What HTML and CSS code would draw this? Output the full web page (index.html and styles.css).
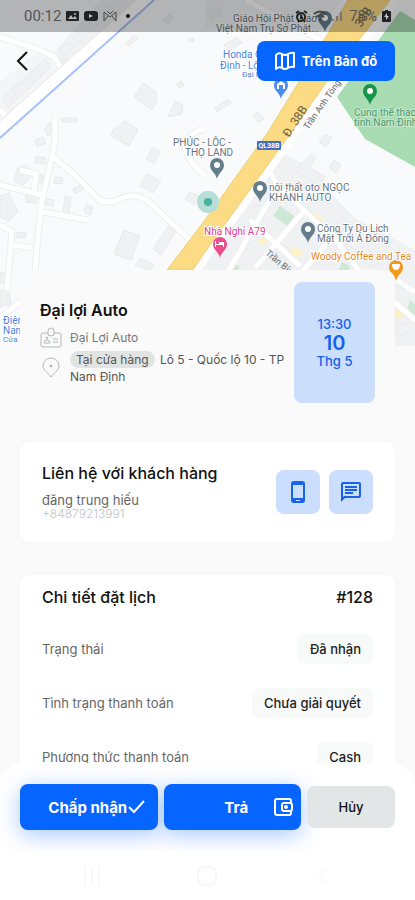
FILE: index.html
```html
<!DOCTYPE html>
<html lang="vi">
  <head>
    <meta charset="UTF-8" />
    <meta name="viewport" content="width=device-width, initial-scale=1.0" />
    <title>Chi tiết đặt lịch</title>
    <link rel="stylesheet" href="styles.css">
  </head>
  <body>
    <div class="screen">
      <svg class="map" viewBox="0 0 415 346" preserveAspectRatio="xMidYMin slice">
        <rect width="415" height="346" fill="#f8fafb" />

        <!-- built-up blocks -->
        <polygon points="100,0 142,0 65,68 52,55" fill="#f0f2f3" />
        <polygon points="205,0 340,0 325,28 205,28" fill="#f2f4f5" />
        <polygon points="0,82 42,48 56,70 0,120" fill="#f3f5f6" />
        <polygon points="276,150 300,162 355,218 415,250 415,346 392,346 392,272 200,272" fill="#eff1f3" />

        <!-- buildings -->
        <g class="building">
          <path d="M143 83l13 9 1 8-5 10-18-13zM175 101l8 4-1 9-14 3zM113 130l12-9 13 9-9 16-18-10z" />
          <path d="M152 147l8 5-6 12-8-5zM147 174l14 7-8 12-13-7zM190 192l9 4-5 9-9-6z" />
          <path d="M124 230l16 6-9 24-17-6zM168 226l8 5-15 24-8-6zM141 258l14 7-5 5-15-5z" />
          <path d="M126 43l8-8 4 3-9 8zM163 20l6-6 4 4-6 7zM189 38l5 0 0 4-5 0zM177 84l4-3 3 4-5 3z" />
          <path d="M58 50l11-9 5 6-11 9zM72 38l11-8 4 5-10 9zM60 62l6-4 5 8-6 3z" />
          <path d="M100 13l8-9 6 6-9 8zM110 3l8-3 7 5-9 8zM84 28l9-9 6 5-9 9z" />
          <path d="M38 65l7-7 5 9-7 7zM30 73l6-6 6 9-7 6zM21 81l7-6 6 9-7 6zM11 89l8-6 6 9-8 7zM2 98l6-6 7 9-7 7z" />
          <path d="M44 130l6-8 5 5-7 9zM62 118l15 0 0 4-15 0zM35 140l8-3 3 6-9 4zM36 156l10 2-1 6-10-1z" />
          <path d="M18 167l9-2 4 12-8 8-9-4zM34 172l9 3-1 8-9-2zM55 177l8 1-1 6-8-1zM0 196l9-3 9 19-9 9-9-4z" />
          <path d="M26 195l11 1-1 7-10-1zM46 199l8 1-1 6-7-1zM65 196l6 1-2 18-6-1zM73 189l9-5 3 4-10 6zM86 204l7 3-2 8-7-3z" />
          <path d="M17 232l9 1-1 5-9-1zM0 290l9 2 2 12-11 3zM0 272l8 2-2 10-6-2z" />
          <path d="M302 163l9-9 5 4-6 9 15 10-6 9-25-16zM334 160l7 5-5 8-7-5zM325 134l7 4-6 9-7-5z" />
          <path d="M224 45l13-8 5 6-13 8zM215 108l13-9 3 4-14 9zM253 115l5-3 6 7-6 3zM206 13l10-7 6 8-10 6z" />
          <path d="M241 207l13-15 9 6-12 15zM222 226l12-12 10 7-12 13zM241 246l10-12 10 8-10 10zM270 251l10-9 10 8-10 9z" />
          <path d="M294 219l9-12 10 8-10 10zM337 253l10-9 12 9-9 8zM361 259l8-8 12 8-8 9zM396 328l8-5 6 6-8 7z" />
        </g>
        <g fill="#fdf2c4">
          <path d="M315 213l8 5-4 6-8-4zM293 247l10 5-5 6-9-5zM258 241l6-5 4 5-6 5zM397 306l9 5-6 8-9-5z" />
        </g>
        <g fill="#cde8d5">
          <path d="M280 206l14 10-6 10-15-10zM342 262l7 4 0 4-10 0zM232 263l8 3-2 4-8 0zM410 300l5 4 0 12-8-6z" />
        </g>

        <!-- park -->
        <polygon points="400,11 415,20 415,167 365,139 337,97" fill="#a9dcb2" />

        <!-- small streets -->
        <g class="street-edge">
          <path d="M0 37L40 50L54 57L62 70M0 110L16 128M55 118V140L52 157L42 200L38 235L29 346M53 157L75 175L98 199Q106 205 120 199Q136 191 150 203L192 242" />
          <path d="M0 185L42 195M20 170L36 174L34 192M43 212L88 220M0 225L12 232L7 290M12 245L32 248M205 129Q188 132 185 148Q190 165 206 176" />
          <path d="M246 0L320 40M0 318L20 302L40 330M266 166L278 186L336 240L360 272M278 186L228 272M304 211L255 268M250 220L300 266M330 240L302 272M385 272L415 292M392 300L415 320" />
        </g>
        <g class="street">
          <path d="M0 37L40 50L54 57L62 70M0 110L16 128M55 118V140L52 157L42 200L38 235L29 346M53 157L75 175L98 199Q106 205 120 199Q136 191 150 203L192 242" />
          <path d="M0 185L42 195M20 170L36 174L34 192M43 212L88 220M0 225L12 232L7 290M12 245L32 248M205 129Q188 132 185 148Q190 165 206 176" />
          <path d="M246 0L320 40M0 318L20 302L40 330M266 166L278 186L336 240L360 272M278 186L228 272M304 211L255 268M250 220L300 266M330 240L302 272M385 272L415 292M392 300L415 320" />
        </g>
        <path d="M145 0L0 129" stroke="#e9ebed" stroke-width="13" />
        <path d="M145 0L0 129" stroke="#fff" stroke-width="11" />
        <path d="M154 0L0 138" stroke="#a6c1fb" stroke-width="2" />

        <!-- highway -->
        <path d="M396 0L328 86L293 136L205 258L194 274" fill="none" stroke="#fff" stroke-width="8" />
        <polygon points="348,0 390,0 328,80 293,130 205,252 193,270 167,270 205,220 268,132 300,80" fill="#fbdc85" stroke="#f1cf78" />
        <rect x="257" y="141" width="24" height="9" rx="1" fill="#3f6fc9" />
        <text class="shield" x="269" y="148">QL38B</text>
        <text class="road" transform="translate(289 138) rotate(-57)">Đ. 38B</text>
        <text class="road" transform="translate(361 28) rotate(-57)">38B</text>
        <text class="lane" transform="translate(308 130) rotate(-55)">Trần Anh Tông</text>
        <text class="lane" transform="translate(265 254) rotate(40)">Trần Bích</text>
        <circle cx="208" cy="202" r="11" fill="#b5ded6" />
        <circle cx="208" cy="202" r="4" fill="#4db29e" />

        <!-- places -->
        <defs>
          <path id="pin" d="M0 0C-1-6-7-8-7-14A7 7 0 0 1 7-14C7-8 1-6 0 0Z" />
        </defs>
        <g fill="#647d8b">
          <use href="#pin" x="217" y="179" />
          <use href="#pin" x="260" y="202" />
          <use href="#pin" x="308" y="243" />
          <use href="#pin" x="325" y="32" />
        </g>
        <use href="#pin" x="281" y="99" fill="#4c8bf0" />
        <use href="#pin" x="370" y="105" fill="#169447" />
        <use href="#pin" x="220" y="258" fill="#ea4c8c" />
        <use href="#pin" x="396" y="281" fill="#f29a1c" />
        <g fill="#fff">
          <circle cx="217" cy="165" r="3" />
          <circle cx="260" cy="188" r="3" />
          <circle cx="308" cy="229" r="3" />
          <circle cx="325" cy="18" r="3" />
          <circle cx="370" cy="91" r="3" />
          <path d="M277 89v-5l4-3 4 3v5h-2v-4h-4v4zM215 247v-6h1v3h3v-2h5v5h-1v-2h-7v2zM392 264h8q0 6-4 6t-4-6z" />
        </g>
        <g class="place">
          <text x="233" y="22">Giáo Hội Phật Giáo</text>
          <text x="216" y="32">Việt Nam Trụ Sở Phật...</text>
          <text x="173" y="146">PHÚC - LỘC -</text>
          <text x="185" y="156">THỌ LAND</text>
          <text x="269" y="191">nội thất oto NGỌC</text>
          <text x="269" y="201">KHÁNH AUTO</text>
          <text x="317" y="232">Công Ty Du Lịch</text>
          <text x="317" y="242">Mặt Trời Á Đông</text>
        </g>
        <g class="place place-blue">
          <text x="223" y="58">Honda Ô</text>
          <text x="220" y="69">Định - Lộc</text>
          <text x="242" y="77" class="place-small">Đại lý</text>
          <text x="3" y="324">Điện</text>
          <text x="3" y="334">Nam</text>
          <text x="3" y="342" class="place-small">Cửa</text>
        </g>
        <g class="place place-green">
          <text x="354" y="116">Cung thể thao</text>
          <text x="354" y="126">tỉnh Nam Định</text>
        </g>
        <text class="place place-pink" x="204" y="235">Nhà Nghỉ A79</text>
        <text class="place place-orange" x="311" y="260">Woody Coffee and Tea</text>
      </svg>

      <div class="status-bar">
        <div class="status-group">
          <span class="clock">00:12</span>
          <svg width="13" height="12" viewBox="0 0 13 12">
            <rect y="1" width="13" height="10" rx="1" fill="#222" />
            <path d="M2 9l3-4 2 3 2-2 2 3z" fill="#bbb" />
            <circle cx="9" cy="4" r="1" fill="#bbb" />
          </svg>
          <svg width="14" height="12" viewBox="0 0 14 12">
            <rect y="1" width="14" height="10" rx="3" fill="#222" />
            <path d="M5 4v4l4-2z" fill="#bbb" />
          </svg>
          <svg width="14" height="12" viewBox="0 0 14 12" fill="none" stroke="#444">
            <path d="M1 11V2l6 5 6-5v9M1 11l4-5M13 11L9 6M4 1l3 3 3-3" />
          </svg>
          <svg width="12" height="12" viewBox="0 0 12 12">
            <circle cx="6" cy="6" r="2" fill="#111" />
          </svg>
        </div>
        <div class="status-group">
          <svg width="13" height="13" viewBox="0 0 13 13" fill="none" stroke="#222" stroke-width="2">
            <circle cx="6" cy="7" r="4" />
            <path d="M1 3l3-2M12 3L9 1M6 5v3h2M3 12l1-1M10 12l-1-1" />
          </svg>
          <svg width="14" height="12" viewBox="0 0 14 12" fill="none" stroke="#444" stroke-width="2">
            <path d="M1 4q6-5 12 0M3 7q4-3 8 0M7 9v2" />
          </svg>
          <svg width="12" height="12" viewBox="0 0 12 12" fill="none" stroke="#777" stroke-width="2">
            <path d="M1 11V9M5 11V6M9 11V2" />
          </svg>
          <span class="battery">78%</span>
          <svg width="9" height="12" viewBox="0 0 9 12">
            <path d="M3 0h3v1h2q1 0 1 1v9q0 1-1 1H1q-1 0-1-1V2q0-1 1-1h2z" fill="#222" />
            <path d="M5 3L2 7h2v3l3-4H5z" fill="#ccc" />
          </svg>
        </div>
      </div>

      <header class="top-bar">
        <button class="back-button" aria-label="Quay lại">
          <svg width="12" height="20" viewBox="0 0 12 20" fill="none" stroke="#111" stroke-width="2">
            <path d="M11 1L2 10l9 9" />
          </svg>
        </button>
        <button class="primary-button map-button">
          <svg width="20" height="20" viewBox="0 0 20 20" fill="none" stroke="#fff" stroke-width="2" stroke-linejoin="round">
            <path d="M1 4q3-3 6-1q3 2 6 0q3-2 6-1v14q-3-1-6 1q-3 2-6 0q-3-2-6 1zM7 3v14M13 3v14" />
          </svg>
          Trên Bản đồ
        </button>
      </header>

      <main class="content">
        <section class="card summary">
          <div class="summary-info">
            <h1>Đại lợi Auto</h1>
            <div class="info-row">
              <svg width="22" height="22" viewBox="0 0 22 22" fill="none" stroke="#b4b7b7" stroke-width="1">
                <path d="M8 6H3q-2 0-2 2v10q0 2 2 2h16q2 0 2-2V8q0-2-2-2h-5" />
                <path d="M8 8V4q0-3 3-3t3 3v4q-3 2-6 0zM13 12h5M13 15h5M4 16q0-3 3-3t3 3z" />
                <circle cx="7" cy="11" r="1" />
              </svg>
              <span>Đại Lợi Auto</span>
            </div>
            <div class="info-row address">
              <svg width="22" height="22" viewBox="0 0 22 22" fill="none" stroke="#b4b7b7" stroke-width="1">
                <path d="M11 20C8 16 3 13 3 9A8 8 0 0 1 19 9C19 13 14 16 11 20Z" />
                <circle cx="11" cy="9" r="1" fill="#888" />
              </svg>
              <p><span class="tag">Tại cửa hàng</span> Lô 5 - Quốc lộ 10 - TP Nam Định</p>
            </div>
          </div>
          <time class="date-box">
            <span>13:30</span>
            <strong>10</strong>
            <span>Thg 5</span>
          </time>
        </section>

        <section class="card contact">
          <div>
            <h2>Liên hệ với khách hàng</h2>
            <p class="customer">đăng trung hiếu</p>
            <p class="phone">+84879213991</p>
          </div>
          <div class="contact-buttons">
            <button class="icon-button" aria-label="Gọi">
              <svg width="24" height="24" viewBox="0 0 24 24" fill="#1a62e8">
                <path d="M16 1H8Q5 1 5 4v16q0 3 3 3h8q3 0 3-3V4q0-3-3-3zM7 5h10v13H7zM10 20h4v1h-4z" fill-rule="evenodd" />
              </svg>
            </button>
            <button class="icon-button" aria-label="Nhắn tin">
              <svg width="24" height="24" viewBox="0 0 24 24" fill="#1a62e8">
                <path d="M4 2h16q2 0 2 2v12q0 2-2 2H6l-4 4V4q0-2 2-2zM4 4v13l1-1h15V4zM6 6h12v2H6zM6 9h12v2H6zM6 12h8v2H6z" fill-rule="evenodd" />
              </svg>
            </button>
          </div>
        </section>

        <section class="card details">
          <div class="details-title">
            <h2>Chi tiết đặt lịch</h2>
            <span class="number">#128</span>
          </div>
          <dl>
            <div class="detail-row">
              <dt>Trạng thái</dt>
              <dd>Đã nhận</dd>
            </div>
            <div class="detail-row">
              <dt>Tình trạng thanh toán</dt>
              <dd>Chưa giải quyết</dd>
            </div>
            <div class="detail-row">
              <dt>Phương thức thanh toán</dt>
              <dd>Cash</dd>
            </div>
          </dl>
        </section>
      </main>

      <footer class="actions">
        <button class="primary-button action-button accept">
          Chấp nhận
          <svg width="18" height="14" viewBox="0 0 18 14" fill="none" stroke="#fff" stroke-width="2">
            <path d="M2 7l5 5L17 1" />
          </svg>
        </button>
        <button class="primary-button action-button pay">
          <span>Trả</span>
          <svg width="20" height="20" viewBox="0 0 20 20" fill="none" stroke="#fff" stroke-width="2">
            <path d="M18 6V4q0-2-2-2H4Q2 2 2 4v12q0 2 2 2h12q2 0 2-2v-2" />
            <rect x="9" y="6" width="10" height="8" rx="2" />
            <circle cx="13" cy="10" r="1" />
          </svg>
        </button>
        <button class="cancel-button">Hủy</button>
      </footer>

      <nav class="system-nav">
        <button aria-label="Gần đây">
          <svg width="20" height="20" viewBox="0 0 20 20" fill="none" stroke="#f8f8f8" stroke-width="2">
            <path d="M3 1v18M10 1v18M17 1v18" />
          </svg>
        </button>
        <button aria-label="Trang chủ">
          <svg width="20" height="20" viewBox="0 0 20 20" fill="none" stroke="#f8f8f8" stroke-width="2">
            <rect x="1" y="1" width="18" height="18" rx="6" />
          </svg>
        </button>
        <button aria-label="Trở về">
          <svg width="20" height="20" viewBox="0 0 20 20" fill="none" stroke="#fafafa" stroke-width="2">
            <path d="M14 2l-8 8 8 8" />
          </svg>
        </button>
      </nav>
    </div>
  </body>
</html>
```
FILE: styles.css
```css
* {
  box-sizing: border-box;
}

body {
  font-family: Inter, "Noto Sans", sans-serif;
  margin: 0;
  color: #111;
  background-color: #fafafa;
}

h1,
h2,
p,
dl,
dd {
  margin: 0;
}

button {
  font-family: inherit;
  border: none;
  padding: 0;
  cursor: pointer;
}

svg {
  flex-shrink: 0;
}

.screen {
  position: relative;
  display: flex;
  flex-direction: column;
  height: 100vh;
  overflow: hidden;
}

/* map */
.map {
  position: absolute;
  top: 0;
  left: 0;
  width: 100%;
  height: 346px;
}

.building {
  fill: #eff1f2;
  stroke: #e8eaec;
}

.street,
.street-edge {
  fill: none;
  stroke: #fff;
  stroke-width: 5;
  stroke-linejoin: round;
}

.street-edge {
  stroke: #eceef0;
  stroke-width: 7;
}

.place {
  font-family: Roboto, sans-serif;
  font-size: 10px;
  fill: #66747d;
  stroke: #fff;
  stroke-width: 2px;
  paint-order: stroke;
}

.place-small {
  font-size: 8px;
}

.place-blue {
  fill: #4a86e0;
}

.place-green {
  fill: #4e9a74;
  stroke: #c3e8ca;
}

.place-pink {
  fill: #e0408c;
}

.place-orange {
  fill: #e58a1e;
}

.road,
.lane,
.shield {
  font-family: Roboto, sans-serif;
  font-size: 12px;
  fill: #6b5a3a;
}

.lane {
  font-size: 9px;
  fill: #666;
}

.shield {
  font-size: 7px;
  font-weight: bold;
  fill: #fff;
  text-anchor: middle;
}

/* header */
.status-bar {
  position: relative;
  display: flex;
  justify-content: space-between;
  align-items: center;
  height: 32px;
  padding: 0 24px;
  background-color: rgba(0, 0, 0, 0.28);
}

.status-group {
  display: flex;
  align-items: center;
  gap: 5px;
}

.clock,
.battery {
  font-family: Roboto, sans-serif;
  font-size: 15px;
  color: #555;
}

.top-bar {
  position: relative;
  display: flex;
  justify-content: space-between;
  align-items: center;
  padding: 9px 20px 0 16px;
}

.back-button {
  display: flex;
  background: none;
}

.primary-button {
  display: flex;
  justify-content: center;
  align-items: center;
  background-color: #0765ff;
  color: white;
  font-weight: bold;
  border-radius: 8px;
}

.map-button {
  width: 138px;
  height: 40px;
  gap: 7px;
  font-size: 13px;
}

/* cards */
.content {
  position: relative;
  flex: 1;
  min-height: 0;
  margin-top: 189px;
  padding: 0 20px;
  overflow: hidden;
}

.card {
  padding: 20px 22px;
  border-radius: 10px;
  background-color: white;
  box-shadow: 0 0 10px rgba(0, 0, 0, 0.02);
}

.summary {
  display: flex;
  justify-content: space-between;
  gap: 4px;
  padding: 12px 20px 22px;
  background-color: #fafafa;
}

.summary-info {
  flex: 1;
  padding-top: 18px;
}

h1,
h2 {
  font-size: 16px;
  line-height: 20px;
  font-weight: 600;
}

h2 {
  font-weight: 500;
}

.info-row {
  display: flex;
  gap: 8px;
  margin-top: 7px;
  font-size: 12px;
  line-height: 22px;
  color: #777;
}

.address {
  margin-top: 2px;
  line-height: 17px;
  color: #555;
}

.address svg {
  margin-top: 6px;
}

.tag {
  padding: 1px 6px;
  margin-right: 2px;
  border-radius: 10px;
  background-color: #e1e4e3;
}

.date-box {
  display: flex;
  flex-direction: column;
  justify-content: center;
  align-items: center;
  width: 81px;
  height: 121px;
  border-radius: 8px;
  background-color: #cbdefb;
  color: #1660ee;
  font-size: 13px;
  line-height: 17px;
  font-weight: 500;
}

.date-box strong {
  font-size: 20px;
  line-height: 20px;
  font-weight: 600;
}

.contact {
  display: flex;
  justify-content: space-between;
  align-items: center;
  height: 100px;
  margin-top: 17px;
}

.customer {
  margin-top: 10px;
  font-size: 13px;
  line-height: 14px;
  color: #666;
}

.phone {
  font-size: 12px;
  line-height: 14px;
  font-weight: 300;
  color: #c4c4c4;
}

.contact-buttons {
  display: flex;
  gap: 9px;
}

.icon-button {
  display: flex;
  justify-content: center;
  align-items: center;
  width: 44px;
  height: 44px;
  border-radius: 8px;
  background-color: #cbdefd;
}

.details {
  margin-top: 33px;
  padding-top: 12px;
}

.details-title {
  display: flex;
  justify-content: space-between;
  margin-bottom: 27px;
  line-height: 20px;
}

.number {
  font-size: 16px;
  font-weight: 500;
}

.detail-row {
  display: flex;
  justify-content: space-between;
  align-items: center;
  margin-bottom: 24px;
  font-size: 13px;
  line-height: 30px;
}

.detail-row dt {
  color: #666;
}

.detail-row dd {
  padding: 0 12px;
  border-radius: 6px;
  background-color: #f8faf9;
  font-weight: 500;
  color: #222;
}

/* footer */
.actions {
  position: relative;
  display: grid;
  grid-template-columns: 1fr 1fr 88px;
  align-items: center;
  gap: 6px;
  height: 88px;
  margin-top: -24px;
  padding: 0 20px;
  border-radius: 24px 24px 0 0;
  background-color: white;
  overflow: hidden;
}

.action-button {
  height: 46px;
  font-size: 15px;
  box-shadow: 0 5px 22px rgba(7, 101, 255, 0.35);
}

.accept {
  padding-left: 16px;
}

.pay {
  padding: 0 8px 0 36px;
}

.pay span {
  flex: 1;
}

.cancel-button {
  height: 42px;
  border-radius: 8px;
  background-color: #e2e6e6;
  color: #111;
  font-size: 13px;
  font-weight: 500;
}

.system-nav {
  position: relative;
  display: flex;
  justify-content: space-around;
  align-items: center;
  height: 49px;
  padding: 0 34px;
  background-color: white;
}

.system-nav button {
  display: flex;
  background: none;
}
```
